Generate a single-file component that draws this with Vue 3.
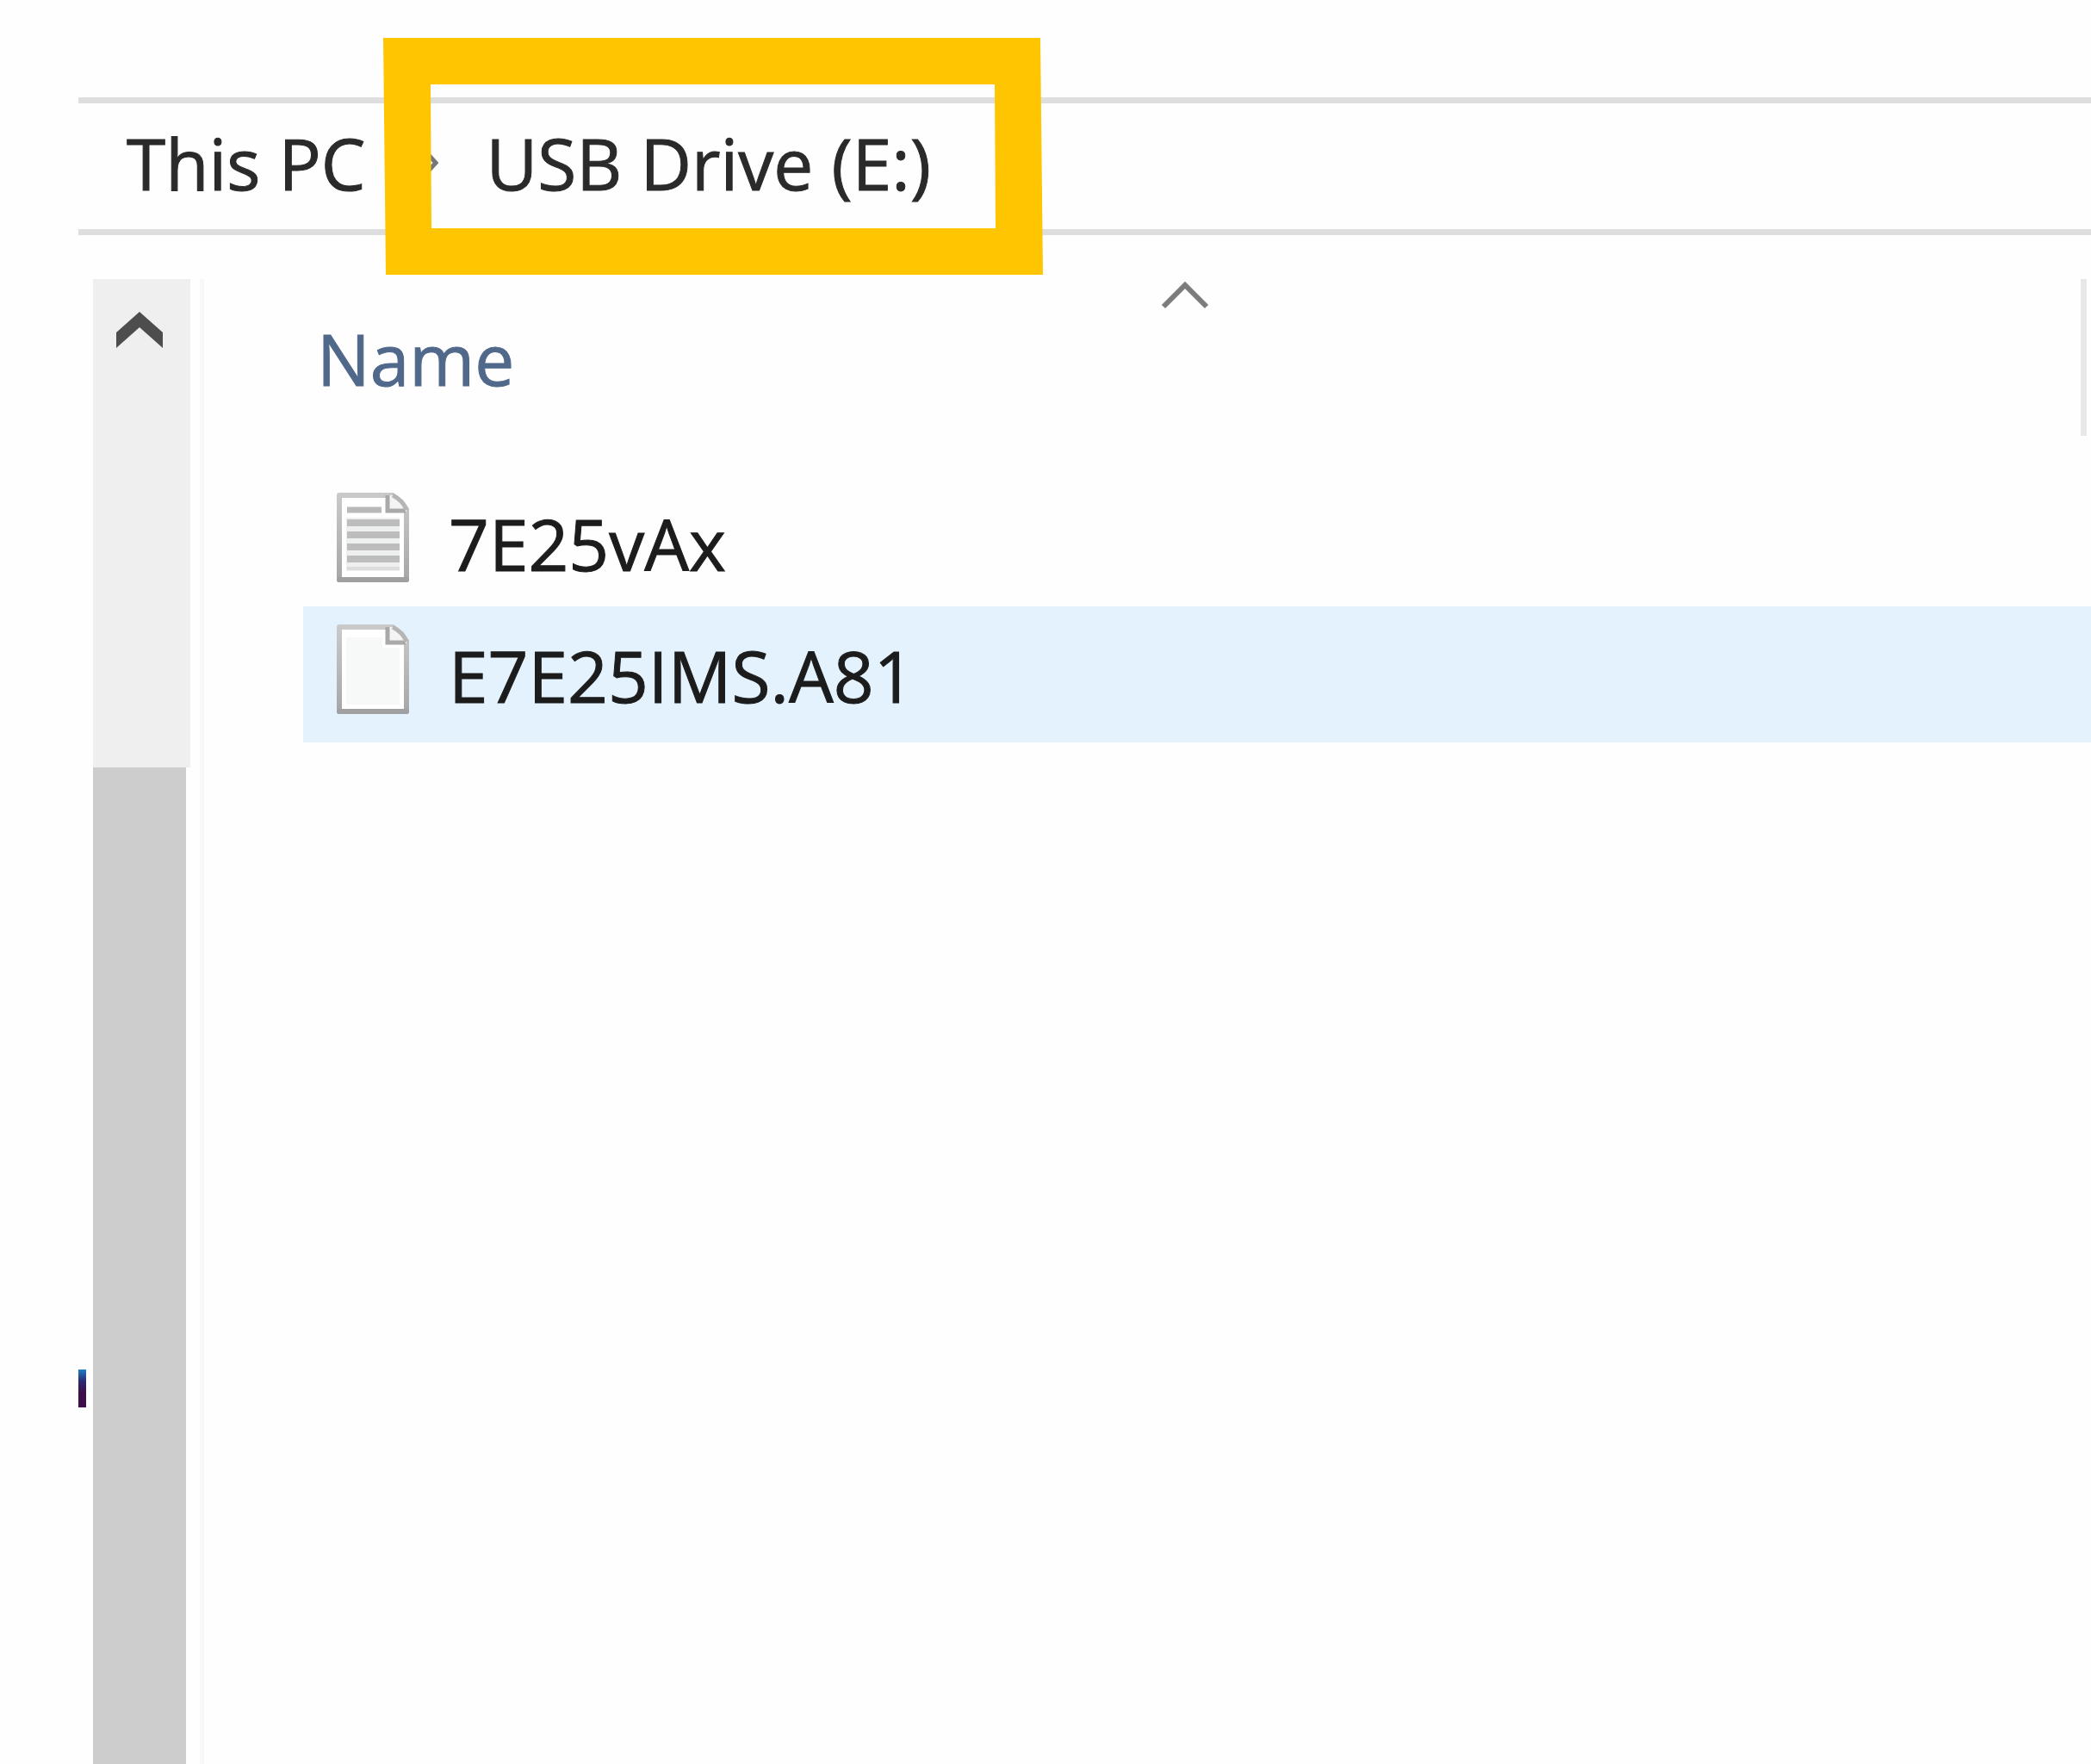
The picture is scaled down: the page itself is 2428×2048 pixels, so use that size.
<script setup>
const files = [
  { name: '7E25vAx', kind: 'text', selected: false },
  { name: 'E7E25IMS.A81', kind: 'blank', selected: true },
]
const textLines = [36, 50, 64, 78]
</script>

<template>
  <div class="explorer">
    <nav class="address" aria-label="Address">
      <a class="crumb first" href="#">This PC</a>
      <svg class="sep" width="16" height="28" viewBox="0 0 16 28" aria-hidden="true">
        <path d="M3 3L13 14L3 25" fill="none" stroke="#777" stroke-width="5" />
      </svg>
      <span class="current">
        <a class="crumb" href="#">USB Drive (E:)</a>
        <svg class="marker" width="766" height="275" viewBox="0 0 766 275" aria-hidden="true">
          <path fill="#ffc500" fill-rule="evenodd" d="M0 0H763L766 275H3ZM55 54L56 221H711L710 54Z" />
        </svg>
      </span>
    </nav>

    <div class="body">
      <div class="tree"><span class="tree-stub"></span></div>
      <div class="scroll">
        <button class="scroll-up" type="button" aria-label="Scroll up">
          <svg width="54" height="42" viewBox="0 0 54 42" aria-hidden="true">
            <path d="M0 24L27 0L54 24V42L27 18L0 42Z" fill="#4d4d4d" />
          </svg>
        </button>
        <div class="thumb"></div>
      </div>

      <main class="pane">
        <table class="files">
          <thead>
            <tr>
              <th scope="col">
                <div class="head">
                  <svg class="sort" width="56" height="32" viewBox="0 0 56 32" aria-hidden="true">
                    <path d="M3 29L28 4L53 29" fill="none" stroke="#7c7c7c" stroke-width="6" />
                  </svg>
                  <button class="name" type="button">Name</button>
                </div>
              </th>
            </tr>
          </thead>
          <tbody>
            <tr v-for="file in files" :key="file.name" :class="{ selected: file.selected }">
              <td>
                <div class="file">
                  <svg class="icon" width="86" height="106" viewBox="0 0 86 106" aria-hidden="true">
                    <defs>
                      <linearGradient :id="'edge-' + file.kind" x1="0" y1="0" x2="0" y2="1">
                        <stop offset="0" stop-color="#c9c9c9" />
                        <stop offset="1" stop-color="#a6a7a8" />
                      </linearGradient>
                    </defs>
                    <path d="M4 4H66L82 20V102H4Z" fill="#fff" :stroke="'url(#edge-' + file.kind + ')'" stroke-width="6" stroke-linejoin="round" />
                    <path d="M4 102H82" stroke="#9fa0a1" stroke-width="6" stroke-linecap="round" />
                    <path v-if="file.kind === 'blank'" d="M12 16H54V28H74V94H12Z" fill="#f7f8f8" />
                    <template v-else>
                      <path d="M12 30H74V92H12Z" fill="#eeefef" />
                      <path d="M13 21H53" stroke="#b9b9b9" stroke-width="7" />
                      <path v-for="y in textLines" :key="y" :d="`M13 ${y}H74`" stroke="#bdbdbd" stroke-width="8" />
                      <path d="M13 89H74" stroke="#dcdcdc" stroke-width="4" />
                    </template>
                    <path d="M60 4H66L82 20V23H60Z" fill="#f4f4f4" />
                    <path d="M60 4V22H81" fill="none" stroke="#a9a9a9" stroke-width="5" />
                    <path d="M66 4Q78 10 82 21" fill="none" stroke="#b5b5b5" stroke-width="5" />
                  </svg>
                  <a class="file-name" href="#">{{ file.name }}</a>
                </div>
              </td>
            </tr>
          </tbody>
        </table>
      </main>
    </div>
  </div>
</template>

<style>
body {
  margin: 0;
  background: #fefefe;
}
</style>

<style scoped>
.explorer {
  box-sizing: border-box;
  display: flex;
  flex-direction: column;
  min-height: 100vh;
  padding: 113px 0 0 91px;
  overflow: hidden;
  font-family: "Open Sans", "Noto Sans", sans-serif;
  font-size: 82px;
  line-height: 112px;
  color: #1c1c1c;
  -webkit-text-stroke: 1px currentColor;
}

a {
  color: inherit;
  text-decoration: none;
}

button {
  border: 0;
  padding: 0;
  background: none;
  font: inherit;
  color: inherit;
}

.address {
  box-sizing: border-box;
  display: flex;
  align-items: center;
  height: 160px;
  padding: 0 0 8px 56px;
  border: solid #dedede;
  border-width: 7px 0;
  white-space: nowrap;
  color: #2a2a2a;
}

.sep {
  margin: 0 56px 0 68px;
}

.current {
  position: relative;
}

.marker {
  position: absolute;
  top: -89px;
  left: -120px;
}

.body {
  display: flex;
  flex: 1;
  margin-top: 51px;
}

.tree {
  width: 17px;
}

.tree-stub {
  display: block;
  width: 9px;
  height: 44px;
  margin-top: 1266px;
  background: linear-gradient(#1c7fc4, #2b2a72 30%, #3d0f4a 60%);
}

.scroll {
  display: flex;
  flex-direction: column;
  width: 124px;
}

.scroll-up {
  display: flex;
  justify-content: center;
  width: 113px;
  height: 567px;
  padding: 38px 6px 0 0;
  background: #efefef;
}

.thumb {
  flex: 1;
  width: 108px;
  background: #cdcdcd;
}

.pane {
  flex: 1;
  padding-left: 115px;
  border-left: 5px solid #f8f8f8;
}

.files {
  width: 100%;
  border-collapse: collapse;
}

th,
td {
  padding: 0;
  text-align: left;
  vertical-align: top;
  font-weight: 400;
}

th {
  height: 227px;
}

.head {
  display: flex;
  flex-direction: column;
  height: 182px;
  margin-right: 5px;
  padding-right: 16px;
  border-right: 7px solid #e8e8e8;
  box-sizing: border-box;
}

.sort {
  align-self: center;
  margin-top: 3px;
}

.name {
  align-self: flex-start;
  margin: 1px 0 0 16px;
  color: #50688a;
}

.file {
  display: flex;
  height: 153px;
}

.selected {
  background: #e4f2fe;
}

.selected .file {
  height: 158px;
}

.icon {
  margin: 20px 45px 0 38px;
}

.file-name {
  margin-top: 24px;
}
</style>
